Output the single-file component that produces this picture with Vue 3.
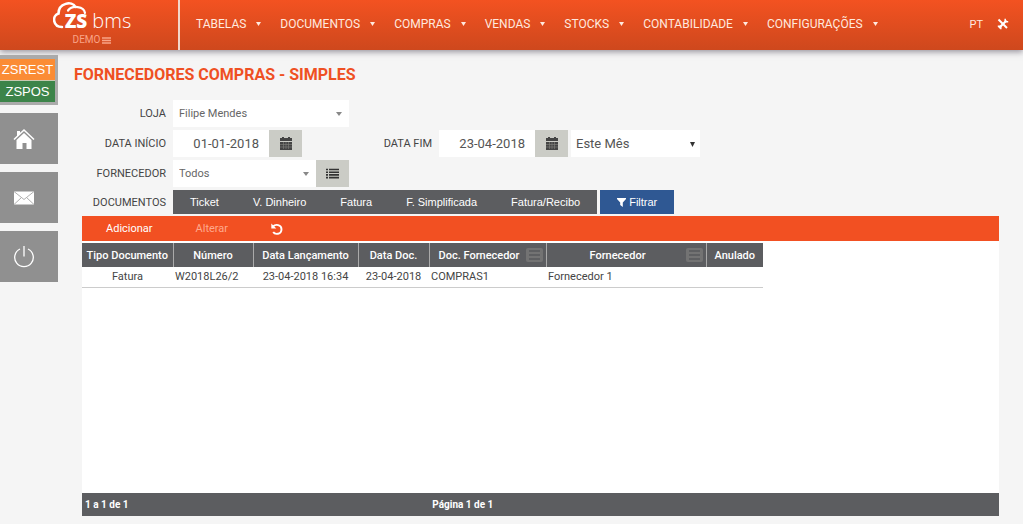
<script setup>
import { ref } from 'vue'

const menus = ['TABELAS', 'DOCUMENTOS', 'COMPRAS', 'VENDAS', 'STOCKS', 'CONTABILIDADE', 'CONFIGURAÇÕES']
const documentTypes = ['Ticket', 'V. Dinheiro', 'Fatura', 'F. Simplificada', 'Fatura/Recibo']
const store = ref('Filipe Mendes')
const startDate = ref('01-01-2018')
const endDate = ref('23-04-2018')
const period = ref('Este Mês')
const supplier = ref('Todos')
const columns = [
  { key: 'type', title: 'Tipo Documento', align: 'center' },
  { key: 'number', title: 'Número', align: 'left' },
  { key: 'posted', title: 'Data Lançamento', align: 'center' },
  { key: 'date', title: 'Data Doc.', align: 'center' },
  { key: 'supplierDoc', title: 'Doc. Fornecedor', align: 'left', filter: true },
  { key: 'supplier', title: 'Fornecedor', align: 'left', filter: true },
  { key: 'voided', title: 'Anulado', align: 'center' }
]
const rows = [
  {
    type: 'Fatura', number: 'W2018L26/2', posted: '23-04-2018 16:34', date: '23-04-2018',
    supplierDoc: 'COMPRAS1', supplier: 'Fornecedor 1', voided: ''
  }
]
</script>

<template>
  <div class="page">
    <header class="topbar">
      <div class="brand">
        <a href="#" class="logo" aria-label="ZS bms">
          <svg class="cloud" viewBox="0 0 36 28" width="36" height="28" fill="none" stroke="#fff" stroke-width="2.6" stroke-linecap="round">
            <path d="M9 25C0 25-1.500 14 5.500 11.500C5.500 1 19-1.500 22.500 5" />
            <path d="M15 8.500C19 3 31 4 32 11" stroke-width="2.200" />
          </svg>
          <span class="zs">ZS</span>
          <span class="bms">bms</span>
        </a>
        <a href="#" class="demo">DEMO
          <svg viewBox="0 0 9 7" width="9" height="7"><path d="M0 1h9M0 3.500h9M0 6h9" stroke="currentColor" stroke-width="1.500" /></svg>
        </a>
      </div>
      <nav class="menu">
        <a v-for="m in menus" :key="m" href="#">{{ m }}
          <svg viewBox="0 0 5 4" width="5" height="4"><path d="M0 0h5L2.500 4z" fill="currentColor" /></svg>
        </a>
      </nav>
      <div class="tools">
        <a href="#">PT</a>
        <button type="button" class="plain" aria-label="Ferramentas">
          <svg viewBox="0 0 12 12" width="12" height="12" fill="none" stroke="#fff">
            <path d="M1.500 1.500l8.500 8.500" stroke-width="2" />
            <path d="M2 10L9.500 2.500" stroke-width="2.200" />
            <path d="M8.200.8v3h3M.8 8.200h3v3" stroke-width="1.500" />
          </svg>
        </button>
      </div>
    </header>

    <div class="body">
      <aside class="side">
        <div class="apps">
          <a href="#" class="rest">ZSREST</a>
          <a href="#" class="pos">ZSPOS</a>
        </div>
        <button type="button" class="tile" aria-label="Início">
          <svg viewBox="0 0 22 22" width="22" height="22" fill="#fff">
            <path d="M3.500 12L11 5l7.500 7v9H13.500v-6h-4v6h-6z" />
            <path d="M1 11.500L11 2l10 9.500" fill="none" stroke="#fff" stroke-width="1.600" />
            <path d="M4 3h3v3l-3 3z" />
          </svg>
        </button>
        <button type="button" class="tile" aria-label="Mensagens">
          <svg viewBox="0 0 22 22" width="22" height="22">
            <path d="M1 4.500h20v13H1z" fill="#fff" />
            <path d="M1 4.500l10 8 10-8M1 17.500l7.500-7M21 17.500l-7.500-7" fill="none" stroke="#b0b0b0" />
          </svg>
        </button>
        <button type="button" class="tile" aria-label="Sair">
          <svg viewBox="0 0 22 22" width="22" height="22" fill="none" stroke="#fff" stroke-width="1.300">
            <path d="M7 3a9.300 9.300 0 1 0 8 0M11 0v10.500" />
          </svg>
        </button>
      </aside>

      <main class="content">
        <h1>FORNECEDORES COMPRAS - SIMPLES</h1>

        <form class="filters" @submit.prevent>
          <label for="store">LOJA</label>
          <div class="field">
            <div class="combo wide">
              <select id="store" v-model="store"><option>Filipe Mendes</option></select>
              <svg viewBox="0 0 6 4" width="6" height="4"><path d="M0 0h6L3 4z" fill="#888" /></svg>
            </div>
          </div>

          <label for="start">DATA INÍCIO</label>
          <div class="field">
            <input id="start" v-model="startDate" type="text" />
            <button type="button" class="square" aria-label="Escolher data de início">
              <svg viewBox="0 0 12 13" width="12" height="13" fill="#444">
                <path d="M0 1h12v3H0zM2 0h2v2H2zM8 0h2v2H8zM0 5h12v8H0z" />
                <path d="M0 7.500h12M0 10h12M3.500 5v7M6 5v7M8.500 5v7" stroke="#85857f" stroke-width=".6" />
              </svg>
            </button>
            <label for="end" class="end-label">DATA FIM</label>
            <input id="end" v-model="endDate" type="text" />
            <button type="button" class="square" aria-label="Escolher data de fim">
              <svg viewBox="0 0 12 13" width="12" height="13" fill="#444">
                <path d="M0 1h12v3H0zM2 0h2v2H2zM8 0h2v2H8zM0 5h12v8H0z" />
                <path d="M0 7.500h12M0 10h12M3.500 5v7M6 5v7M8.500 5v7" stroke="#85857f" stroke-width=".6" />
              </svg>
            </button>
            <div class="combo period">
              <select v-model="period" aria-label="Período"><option>Este Mês</option></select>
              <svg viewBox="0 0 5 5" width="5" height="5"><path d="M0 0h5L2.500 5z" fill="#333" /></svg>
            </div>
          </div>

          <label for="supplier">FORNECEDOR</label>
          <div class="field">
            <div class="combo supplier">
              <select id="supplier" v-model="supplier"><option>Todos</option></select>
              <svg viewBox="0 0 6 4" width="6" height="4"><path d="M0 0h6L3 4z" fill="#888" /></svg>
            </div>
            <button type="button" class="square" aria-label="Listar fornecedores">
              <svg viewBox="0 0 13 11" width="13" height="11" stroke="#333" stroke-width="1.600">
                <path d="M0 1.500h2M3 1.500h10M0 4.200h2M3 4.200h10M0 6.900h2M3 6.900h10M0 9.600h2M3 9.600h10" />
              </svg>
            </button>
          </div>

          <span class="caption">DOCUMENTOS</span>
          <div class="field">
            <div class="types" role="group" aria-label="Documentos">
              <button v-for="t in documentTypes" :key="t" type="button">{{ t }}</button>
            </div>
            <button type="submit" class="apply">
              <svg viewBox="0 0 9 9" width="9" height="9"><path d="M0 0h9v1L5.800 4.500V9L3.200 7V4.500L0 1z" fill="#fff" /></svg>Filtrar
            </button>
          </div>
        </form>

        <section class="grid">
          <div class="actions">
            <button type="button" class="plain">Adicionar</button>
            <button type="button" class="plain" disabled>Alterar</button>
            <button type="button" class="plain" aria-label="Atualizar">
              <svg viewBox="0 0 12 12" width="12" height="12" fill="none" stroke="#fff" stroke-width="1.900">
                <path d="M2 3.500C4.500.8 10.500 1.500 10.500 6.200C10.500 11.500 4 12 2.200 9" />
                <path d="M.3.5v5h5z" fill="#fff" stroke="none" />
              </svg>
            </button>
          </div>
          <div class="sheet">
            <table>
              <colgroup><col v-for="c in columns" :key="c.key" :class="c.key" /></colgroup>
              <thead>
                <tr>
                  <th v-for="c in columns" :key="c.key" scope="col">
                    <div class="head">
                      <span>{{ c.title }}</span>
                      <button v-if="c.filter" type="button" class="plain" :aria-label="'Filtrar ' + c.title">
                        <svg viewBox="0 0 17 14" width="17" height="14">
                          <rect width="17" height="14" rx="2" fill="#737373" />
                          <path d="M3 3h11M3 7h11M3 11h11" stroke="#58595c" stroke-width="1.500" />
                        </svg>
                      </button>
                    </div>
                  </th>
                </tr>
              </thead>
              <tbody>
                <tr v-for="r in rows" :key="r.number">
                  <td v-for="c in columns" :key="c.key" :class="c.align">{{ r[c.key] }}</td>
                </tr>
              </tbody>
            </table>
          </div>
          <footer class="status"><span>1 a 1 de 1</span><span>Página 1 de 1</span></footer>
        </section>
      </main>
    </div>
  </div>
</template>

<style>
body { background: #f5f5f5; }
</style>

<style scoped>
* { box-sizing: border-box; }
.page { min-height: 100vh; display: flex; flex-direction: column; background: #f5f5f5; color: #444; font: 11px Roboto, sans-serif; }
a { color: inherit; text-decoration: none; }
button, input, select { font: inherit; border: 0; border-radius: 0; margin: 0; }
button { display: inline-flex; align-items: center; justify-content: center; padding: 0; cursor: pointer; }
svg { display: block; flex: none; }
.plain { background: none; color: inherit; }

.topbar { display: flex; height: 50px; background: linear-gradient(#f35221, #ce481d); color: #ffe9df; box-shadow: 0 2px 6px rgba(60, 50, 70, .5); }
.brand { width: 180px; padding-left: 6px; border-right: 2px solid #f3d6ca; display: flex; flex-direction: column; align-items: center; flex: none; }
.logo { position: relative; display: flex; align-items: baseline; gap: 5px; height: 33px; padding: 8px 0 0 12px; color: #fff; font-family: "Open Sans", sans-serif; line-height: 26px; }
.cloud { position: absolute; left: 0; top: 2px; }
.zs { font-size: 19px; font-weight: 800; }
.bms { font-size: 20px; font-weight: 300; }
.demo { display: flex; align-items: center; gap: 2px; font-size: 10px; line-height: 14px; color: #f9a487; }
.menu { display: flex; align-items: center; gap: 19px; padding: 0 0 2px 16px; font-size: 12px; white-space: nowrap; }
.menu a { display: flex; align-items: center; gap: 10px; }
.tools { margin-left: auto; padding: 0 14px 2px 0; display: flex; align-items: center; gap: 14px; }

.body { flex: 1; display: flex; }
.side { width: 58px; padding-top: 5px; display: flex; flex-direction: column; gap: 8px; flex: none; }
.apps { border: solid #aaa; border-width: 4px 3px 3px 0; display: flex; flex-direction: column; font: 13px/21px "Liberation Sans", Arial, sans-serif; color: #fff; text-align: center; }
.rest { background: #fb8c35; border-bottom: 1px solid #c8c8b0; }
.pos { background: #3c8449; }
.tile { height: 51px; padding-right: 10px; background: #909090; }

.content { flex: 1; min-width: 0; display: flex; flex-direction: column; padding: 15px 24px 8px 16px; }
h1 { margin: 0 0 15px; font-size: 16px; line-height: 20px; font-weight: 700; color: #ef5023; }
.filters { display: grid; grid-template-columns: 92px 1fr; column-gap: 7px; row-gap: 3px; align-items: center; }
.filters > label, .caption { text-align: right; }
.field { display: flex; white-space: nowrap; }
.field input { width: 96px; height: 27px; padding: 0 10px; text-align: right; background: #fff; color: #555; font-size: 13px; }
.combo { position: relative; height: 27px; }
.combo select { width: 100%; height: 100%; appearance: none; background: #fff; color: #666; padding: 0 20px 0 6px; }
.combo svg { position: absolute; right: 7px; top: 12px; pointer-events: none; }
.wide { width: 176px; }
.supplier { width: 143px; }
.period { width: 129px; margin-left: 3px; }
.combo.period select { font-size: 13px; color: #555; padding-left: 5px; }
.combo.period svg { right: 5px; }
.square { width: 33px; height: 27px; background: #cbccc6; }
.end-label { width: 130px; margin-right: 7px; text-align: right; line-height: 27px; }
.types { display: flex; margin-right: 3px; background: #5c5d60; }
.types button, .apply { height: 24px; padding: 0 17px; color: #fff; font: 11px "Liberation Sans", Arial, sans-serif; background: #5c5d60; }
.apply { gap: 3px; background: #2f5893; }

.grid { flex: 1; margin: 2px 0 0 8px; display: flex; flex-direction: column; background: #fff; }
.actions { height: 25px; background: #f25022; color: #fff; display: flex; align-items: center; padding-left: 24px; gap: 43px; }
.actions :disabled { color: #ffa98d; }
.sheet { flex: 1; padding-top: 2px; }
table { width: 681px; table-layout: fixed; border-collapse: collapse; }
.type { width: 91px; }
.number { width: 80px; }
.posted { width: 105px; }
.date { width: 71px; }
.supplierDoc { width: 117px; }
col.supplier { width: 160px; }
.voided { width: 57px; }
th { height: 24px; padding: 0 3px; background: #5c5d60; color: #fff; font-weight: 500; white-space: nowrap; }
th + th { border-left: 1px solid #aaa; }
.head { display: flex; align-items: center; }
.head span { flex: 1; text-align: center; }
td { height: 20px; padding: 0 2px; border-bottom: 1px solid #ccc; white-space: nowrap; }
.left { text-align: left; }
.center { text-align: center; }
.status { display: grid; grid-template-columns: 38% 1fr; height: 23px; align-items: center; padding-left: 3px; background: #5c5d60; color: #fff; font-size: 10px; font-weight: 700; }
</style>
